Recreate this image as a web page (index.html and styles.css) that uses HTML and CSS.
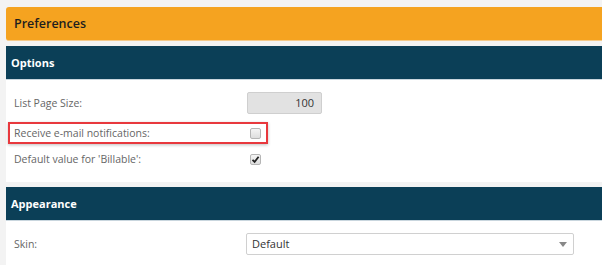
FILE: index.html
```html
<!DOCTYPE html>
<html lang="en-us">

<head>
<meta charset="utf-8">
<title>Preferences</title>
<meta name="viewport" content="width=device-width, initial-scale=1" />
<link rel="stylesheet" href="styles.css">
</head>

<body>

    <div id="mainContent">
        <h1 class="pageTitle">Preferences</h1>

        <!-- Options section -->
        <div class="section">
          <h2 class="sectionHead">Options</h2>
          <div class="sectionBody">
            <div class="row first">
              <span class="label">List Page Size:</span>
              <span class="numBox">100</span>
            </div>
            <div class="row marked">
              <span class="label">Receive e-mail notifications:</span>
              <span class="check"></span>
            </div>
            <div class="row last">
              <span class="label">Default value for 'Billable':</span>
              <span class="check on">
                <svg width="9" height="9" viewBox="0 0 9 9"><path d="M1.5 4.8 L3.6 6.9 L7.6 1.8" fill="none" stroke="#222" stroke-width="1.8"/></svg>
              </span>
            </div>
          </div>
        </div>

        <!-- Appearance section -->
        <div class="section">
          <h2 class="sectionHead">Appearance</h2>
          <div class="sectionBody">
            <div class="row first">
              <span class="label">Skin:</span>
              <span class="selectBox">
                Default
                <svg class="arrow" width="8" height="5" viewBox="0 0 8 5"><path d="M0 0 L8 0 L4 5 Z" fill="#888"/></svg>
              </span>
            </div>
          </div>
        </div>
    </div>

</body>
</html>
```

FILE: styles.css
```css
body {
  margin: 0;
  background-color: #f3f3f3;
  font-family: "Open Sans", "Noto Sans", sans-serif;
}

#mainContent {
  margin: 7px 0 0 6px;
}

/* Orange page title bar */
.pageTitle {
  margin: 0;
  height: 33px;
  line-height: 33px;
  padding-left: 8px;
  background-color: #f5a320;
  border-radius: 3px 0 0 3px;
  border-bottom: 1px solid #f3c98a;
  font-size: 12.5px;
  font-weight: 600;
  color: #1e1e1e;
}

.section {
  margin-top: 5px;
  background-color: #fff;
  border-radius: 2px 0 0 0;
}

/* Dark teal section header */
.sectionHead {
  margin: 0;
  height: 33px;
  line-height: 33px;
  padding-left: 5px;
  background-color: #0b3f57;
  border-bottom: 1px solid #c9d6de;
  font-size: 11px;
  font-weight: 700;
  color: #fff;
}

.sectionBody {
  padding: 12px 2px 12px;
}

.row {
  display: flex;
  align-items: center;
  height: 22px;
  padding: 0 6px;
  font-size: 10.5px;
  color: #666;
}
.row.marked {
  width: 248px;
  margin-top: 8px;
  padding: 0 4px;
  border: 2px solid #e8383d;
  box-shadow: 0 1px 3px rgba(0, 0, 0, 0.25);
  height: 18px;
}
.row.last { margin-top: 4px; }

.label {
  width: 233px;
  flex-shrink: 0;
}

/* Read-only number field */
.numBox {
  width: 66px;
  height: 20px;
  line-height: 20px;
  padding-right: 7px;
  text-align: right;
  background-color: #e2e2e2;
  border: 1px solid #cfcfcf;
  border-radius: 2px;
  color: #333;
  font-size: 11px;
}

/* Checkbox look */
.check {
  display: flex;
  align-items: center;
  justify-content: center;
  box-sizing: border-box;
  width: 11px;
  height: 11px;
  margin-left: 3px;
  border: 1px solid #b5b5b5;
  border-radius: 2px;
  background: linear-gradient(#f4f4f4, #dedede);
}

/* Dropdown */
.selectBox {
  position: relative;
  box-sizing: border-box;
  width: 328px;
  height: 22px;
  line-height: 20px;
  padding-left: 5px;
  margin-left: -1px;
  background-color: #fff;
  border: 1px solid #d0d0d0;
  border-radius: 2px;
  color: #333;
  font-size: 11px;
}
.arrow {
  position: absolute;
  right: 6px;
  top: 8px;
}
```
